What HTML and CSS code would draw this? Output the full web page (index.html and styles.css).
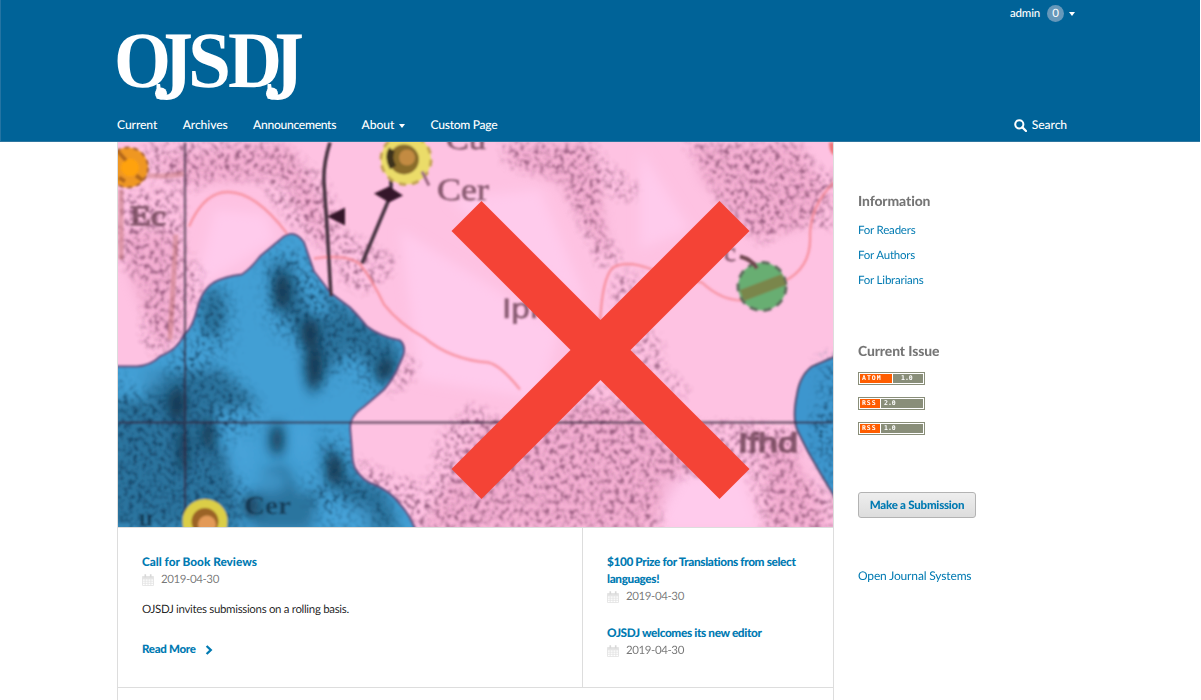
FILE: index.html
```html
<!DOCTYPE html>
<html lang="en">
<head>
<meta charset="utf-8">
<title>OJSDJ</title>
<link rel="stylesheet" href="styles.css">
</head>
<body>
<header class="site-header">
  <div class="user-bar"><a>admin</a><span class="count">0</span><i class="caret"></i></div>
  <svg class="logo" width="188" height="72" viewBox="116 31 188 72" role="img" aria-label="OJSDJ">
    <g class="logo-text">
      <text transform="translate(114 87) scale(1 1.17)" font-size="68" textLength="57" lengthAdjust="spacingAndGlyphs">O</text>
      <text transform="translate(153 99) scale(1 1.45)" font-size="68" textLength="40" lengthAdjust="spacingAndGlyphs">J</text>
      <text transform="translate(188 87) scale(1 1.17)" font-size="68" textLength="43" lengthAdjust="spacingAndGlyphs">S</text>
      <text transform="translate(228 87) scale(1 1.18)" font-size="68" textLength="54" lengthAdjust="spacingAndGlyphs">D</text>
      <text transform="translate(264 99) scale(1 1.45)" font-size="68" textLength="40" lengthAdjust="spacingAndGlyphs">J</text>
      <circle cx="161" cy="93.5" r="6"/><circle cx="272" cy="93.5" r="6"/>
    </g>
  </svg>
  <div class="nav-row">
    <nav class="nav">
      <a>Current</a><a>Archives</a><a class="tight">Announcements</a><a>About<i class="caret"></i></a><a class="tight">Custom Page</a>
    </nav>
    <a class="search"><svg width="13" height="13" viewBox="0 0 13 13"><circle cx="5.3" cy="5.3" r="4.1" fill="none" stroke="#fff" stroke-width="2"/><path d="M8.4 8.4L12 12" stroke="#fff" stroke-width="2.2" stroke-linecap="round"/></svg>Search</a>
  </div>
</header>
<div class="page">
  <main class="main">
    <svg class="map" width="715" height="385" viewBox="118 142.5 715 385">
      <defs>
        <filter id="dots" x="-5%" y="-5%" width="110%" height="110%" color-interpolation-filters="sRGB">
          <feTurbulence type="fractalNoise" baseFrequency="0.2" numOctaves="3" seed="7"/>
          <feColorMatrix values="0 0 0 0 .42  0 0 0 0 .2  0 0 0 0 .34  3.4 0 0 0 -1.6" result="n"/>
          <feGaussianBlur in="SourceAlpha" stdDeviation="4" result="s"/>
          <feComposite in="n" in2="s" operator="in"/>
        </filter>
        <filter id="inkdots" x="-5%" y="-5%" width="110%" height="110%" color-interpolation-filters="sRGB">
          <feTurbulence type="fractalNoise" baseFrequency="0.21" numOctaves="2" seed="3"/>
          <feColorMatrix values="0 0 0 0 .08  0 0 0 0 .25  0 0 0 0 .38  3.2 0 0 0 -1.45" result="n"/>
          <feGaussianBlur in="SourceAlpha" stdDeviation="9" result="s"/>
          <feComposite in="n" in2="s" operator="in"/>
        </filter>
        <filter id="soft"><feGaussianBlur stdDeviation="0.9"/></filter>
        <filter id="shade" x="-60%" y="-60%" width="220%" height="220%"><feGaussianBlur stdDeviation="6"/></filter>
        <path id="lake" d="M110 367H137Q151 366 160 357Q178 350 184 335Q192 330 197 310Q202 290 214 283Q225 277 242 275Q251 269 260 257L284 237Q295 230 304 243Q309 258 314 272Q322 282 330 293L350 308Q359 317 367 327Q380 337 400 341Q408 348 400 363Q395 377 384 390L364 407Q350 416 350 428L352 452Q352 466 357 472Q364 482 374 485Q391 492 400 505Q410 515 417 535H110Z"/>
        <clipPath id="lakeclip"><use href="#lake"/></clipPath>
      </defs>
      <rect x="110" y="135" width="730" height="400" fill="#fec2e2"/>
      <g fill="#ffcbec" filter="url(#shade)">
        <path d="M215 210L265 215L275 240L195 290ZM400 230L560 330L540 400L420 380ZM540 190L590 310L450 200ZM660 480L740 470L760 530H665ZM640 150L690 230L640 250Z"/>
      </g>
      <g fill="#dc7fa9" opacity=".25" filter="url(#shade)">
        <path d="M118 230H175L182 330L158 350L130 280ZM240 145H290L320 200L330 260L280 180L190 185L150 160ZM505 145H590L600 180L610 260L585 230L560 185L510 165ZM690 145H800L830 200L800 230L755 240L700 180ZM480 430L600 400L710 430L650 530H420ZM760 440H790L830 530H770Z"/>
      </g>
      <g filter="url(#soft)">
        <g filter="url(#dots)" opacity=".66">
          <path d="M145 143H280L325 180L340 220L325 250L285 220L260 180L215 178L195 190L150 178ZM120 190H183V330L160 360L142 340L145 290L118 260ZM188 250L204 275L196 305L186 310Z"/>
          <path d="M330 225L360 240L395 258L388 278L362 293L340 280Z"/>
          <path d="M502 143H592L608 165L638 186L630 202L598 190L600 220L622 262L600 268L578 220L560 180L505 166Z"/>
          <path d="M683 143H798L820 172L836 175V230L805 226L782 232L762 245L720 205L705 170Z"/>
          <path d="M615 275L640 270L628 302L612 304ZM635 330L658 336L666 368L688 390L682 400L655 370L632 375Z"/>
          <path d="M470 405L510 422L560 425L580 400L600 385L660 425L740 423L800 430L795 470L740 474L655 480L662 530H417L400 505L360 480L350 456L390 475L430 485L438 440Z"/>
          <path d="M748 474L795 470L834 500V530H765Z"/>
          <path d="M404 355L417 362L410 382L388 398Z"/>
        </g>
        <g fill="none" stroke="#f6838c" stroke-width="2.4" opacity=".75">
          <path d="M189 227Q202 197 222 193Q252 188 287 234"/>
          <path d="M314 259Q350 254 361 266Q372 280 384 305Q400 325 424 338Q450 360 488 363Q500 365 520 390"/>
          <path d="M600 325Q602 278 613 268Q627 260 652 270L702 283Q722 302 746 301M784 282Q812 268 810 235Q811 205 834 183"/>
          <path d="M118 172Q160 180 183 174M176 235L170 340M121 190V260" stroke="#ba655e" stroke-width="5" opacity=".5"/>
        </g>
        <use href="#lake" fill="#439fd4"/>
        <g clip-path="url(#lakeclip)">
          <g fill="#174c6b" opacity=".5" filter="url(#shade)">
            <ellipse cx="213" cy="313" rx="13" ry="25"/>
            <path d="M271 260L290 265L310 315L350 320L350 350L320 380L311 400L305 345L275 305Z"/>
            <path d="M140 375L220 370L260 405L212 410L218 450L182 470Z"/>
            <path d="M110 400H165L230 455L240 528H110ZM320 435L350 475L385 490L400 530H370L335 490ZM320 290L400 345L390 385L350 350Z"/>
            <ellipse cx="277" cy="440" rx="8" ry="17"/>
            <path d="M255 500L265 470L285 465L300 495L320 490L310 530H255Z"/>
          </g>
          <g fill="#0b2031" opacity=".75" filter="url(#shade)">
            <ellipse cx="282" cy="292" rx="8" ry="19"/><ellipse cx="310" cy="334" rx="9" ry="15"/><ellipse cx="314" cy="367" rx="8" ry="23"/>
            <ellipse cx="177" cy="405" rx="9" ry="17"/><ellipse cx="183" cy="450" rx="5" ry="24"/><ellipse cx="334" cy="470" rx="8" ry="17"/>
            <ellipse cx="385" cy="370" rx="8" ry="13" transform="rotate(25 385 370)"/><ellipse cx="251" cy="507" rx="8" ry="12"/><ellipse cx="277" cy="440" rx="5" ry="14"/><ellipse cx="208" cy="435" rx="6" ry="16"/>
          </g>
          <g filter="url(#inkdots)" opacity=".8">
            <path d="M195 300L230 285V350L190 360ZM265 255L300 250L330 295L400 350L375 400L350 360L320 390L305 350L270 325ZM180 345L240 385L260 420L215 460L250 490L240 530H110V375L160 400ZM300 480L370 480L400 530H330ZM320 430L350 450L355 490H330Z"/>
          </g>
          <g fill="#48a5dc" opacity=".6" filter="url(#shade)">
            <ellipse cx="352" cy="519" rx="23" ry="15"/><ellipse cx="302" cy="441" rx="11" ry="22"/><ellipse cx="270" cy="482" rx="17" ry="12"/><ellipse cx="145" cy="380" rx="20" ry="9"/><ellipse cx="240" cy="455" rx="13" ry="24"/>
          </g>
        </g>
        <use href="#lake" fill="none" stroke="#5b487b" stroke-width="2"/>
        <path d="M840 355L812 367Q800 376 797 395Q792 420 798 432L808 452L823 478L840 506Z" fill="#3d96ce" stroke="#50446b" stroke-width="2"/>
        <path d="M825 360L840 355V500L824 460L809 430L825 405Z" filter="url(#inkdots)"/>
        <path d="M118 423H833M185 143V527" stroke="#35263d" stroke-width="2.4" opacity=".65"/>
        <g fill="none" stroke="#463041" stroke-width="3.6"><path d="M330 143Q323 165 324 183L327 227L331 297M391 160V195L362 264"/></g>
        <path d="M374 194L389 187L403 196L389 203ZM327 217L345 208V226Z" fill="#351529"/>
        <circle cx="128" cy="168" r="20" fill="#ef9723" stroke="#a45d36" stroke-width="2" stroke-dasharray="5 4"/><circle cx="130" cy="168" r="9" fill="#ffa20e"/><path d="M118 152l8 9M136 176l7 5M119 178l6 4" stroke="#b3681f" stroke-width="4" fill="none"/>
        <circle cx="406" cy="160" r="25" fill="#ebdc69"/><circle cx="406" cy="160" r="25" fill="none" stroke="#c3a353" stroke-width="3" stroke-dasharray="7 6"/><circle cx="404" cy="160" r="15" fill="#8a6c2c"/><circle cx="407" cy="158" r="8" fill="#c38b43"/><path d="M392 150Q387 157 393 168" stroke="#3d301c" stroke-width="7" fill="none"/><path d="M422 172l7 14" stroke="#9e6984" stroke-width="3"/>
        <circle cx="205" cy="522" r="18" fill="#9b6426" stroke="#dbce47" stroke-width="9"/><circle cx="207" cy="525" r="9" fill="#e39a58"/>
        <circle cx="762" cy="287" r="24" fill="#68ae72" stroke="#5e6c5d" stroke-width="3" stroke-dasharray="8 6"/><path d="M742 296L784 280" stroke="#82763d" stroke-width="12" opacity=".7"/><path d="M740 257Q752 260 757 269" stroke="#704650" stroke-width="4" fill="none"/>
        <path d="M829 143H834V156Q829 153 829 143Z" fill="#ef7477"/>
        <g class="map-label">
          <text class="heavy" x="130" y="225" font-size="28" textLength="36" lengthAdjust="spacingAndGlyphs">Ec</text>
          <text x="437" y="200" font-size="31" textLength="52" lengthAdjust="spacingAndGlyphs">Cer</text>
          <text x="446" y="149" font-size="28" textLength="40" lengthAdjust="spacingAndGlyphs">Cu</text>
          <text class="sans" x="502" y="318" font-size="28" textLength="37" lengthAdjust="spacingAndGlyphs">Ipf</text>
          <text x="724" y="261" font-size="27">c</text>
          <text class="sans heavy" x="738" y="452" font-size="27" textLength="60" lengthAdjust="spacingAndGlyphs">Ifhd</text>
          <text class="ink" x="244" y="514" font-size="26" textLength="47" lengthAdjust="spacingAndGlyphs">Cer</text>
          <text class="ink" x="139" y="526" font-size="25">u</text>
        </g>
      </g>
    </svg>
    <div class="announcements">
      <article class="featured">
        <h2>Call for Book Reviews</h2>
        <div class="date"><svg class="cal" viewBox="0 0 12 12"><use href="#cal"/></svg>2019-04-30</div>
        <p>OJSDJ invites submissions on a rolling basis.</p>
        <a class="more">Read More<svg width="8" height="10" viewBox="0 0 8 10"><path d="M1.6 1L5.8 5L1.6 9" fill="none" stroke="#007ab2" stroke-width="2.3"/></svg></a>
      </article>
      <div class="others">
        <article><h2>$100 Prize for Translations from select languages!</h2>
        <div class="date"><svg class="cal" viewBox="0 0 12 12"><use href="#cal"/></svg>2019-04-30</div></article>
        <article><h2>OJSDJ welcomes its new editor</h2>
        <div class="date"><svg class="cal" viewBox="0 0 12 12"><use href="#cal"/></svg>2019-04-30</div></article>
      </div>
    </div>
  </main>
  <aside class="sidebar">
    <section class="info"><h3>Information</h3><a>For Readers</a><a>For Authors</a><a>For Librarians</a></section>
    <section class="feeds"><h3>Current Issue</h3>
      <div class="feed"><b class="wide">ATOM</b><span class="center">1.0</span></div>
      <div class="feed"><b>RSS</b><span>2.0</span></div>
      <div class="feed"><b>RSS</b><span>1.0</span></div>
    </section>
    <a class="submit">Make a Submission</a>
    <a class="ojs">Open Journal Systems</a>
  </aside>
</div>
<svg class="cross" width="299" height="298" viewBox="0 0 299 298"><path transform="translate(.5)" d="M30 0L149 119L268 0L298 30L179 149L298 268L268 298L149 179L30 298L0 268L119 149L0 30Z" fill="#f44336"/></svg>
<svg width="0" height="0" class="symbols"><symbol id="cal" viewBox="0 0 12 12"><path d="M.5 2.5h11v9H.5zM.5 5h11M.5 7.2h11M.5 9.3h11M3.2 5v6.5M6 5v6.5M8.8 5v6.5" fill="none" stroke="#e2e2e2" stroke-width=".8"/><path d="M.5 2.3h11V4.8H.5z" fill="#e2e2e2"/><path d="M3.3.3v3M8.7.3v3" stroke="#d8d8d8" stroke-width="1.6"/></symbol></svg>
</body>
</html>
```
FILE: styles.css
```css
* { box-sizing: border-box; }
body { margin: 0; height: 700px; overflow: hidden; position: relative; background: #fff; font: 11.5px/16px Lato, sans-serif; color: rgba(0,0,0,.87); text-rendering: geometricPrecision; }
h2, h3, p { margin: 0; }
a { color: #007ab2; }
.site-header { height: 142px; margin-right: 1px; padding: 0 125px 0 116px; background: #006398; display: flex; flex-direction: column; border-bottom: 1px solid #2d76a0; border-left: 1px solid #2474a3; }
.site-header a { color: #fff; font-weight: 500; }
.user-bar { display: flex; justify-content: flex-end; align-items: center; height: 27px; font-size: 11.5px; letter-spacing: -.2px; }
.count { width: 17px; height: 17px; border-radius: 50%; background: #6698ba; color: #fff; text-align: center; line-height: 17px; margin: 0 5px 0 7px; }
.caret { display: inline-block; border: 3.5px solid transparent; border-top: 4px solid #fff; border-bottom: 0; }
.logo { margin: 4px 0 0 -1px; flex: none; overflow: visible; }
.logo-text { font-family: "Liberation Serif", serif; font-weight: bold; fill: #fff; }
.nav-row { display: flex; justify-content: space-between; align-items: center; height: 20px; margin-top: 12px; font-size: 12.1px; padding-right: 8px; }
.nav { display: flex; gap: 25.4px; letter-spacing: -.08px; }
.nav .tight { letter-spacing: -.3px; }
.nav .caret { margin-left: 5px; vertical-align: 1px; }
.search { display: flex; align-items: center; gap: 5px; letter-spacing: -.1px; }
.page { display: flex; }
.main { width: 717px; margin-left: 117px; border: solid #ddd; border-width: 0 1px; height: 558px; }
.map { display: block; }
.map-label { font-family: "Liberation Serif", serif; fill: #6c4054; stroke: #6c4054; stroke-width: .6; opacity: .8; }
.map-label .sans { font-family: "Liberation Sans", sans-serif; }
.map-label .heavy { stroke-width: 1.4; }
.map-label .ink { fill: #14324a; font-weight: bold; stroke: none; }
.announcements { display: flex; border: solid #ddd; border-width: 1px 0; height: 161px; }
.announcements h2 { font-size: 11.8px; line-height: 17px; font-weight: 900; color: #007ab2; }
.featured { width: 465px; border-right: 1px solid #ddd; padding: 25px 24px 0; }
.others { flex: 1; padding: 25px 24px 0; }
.others h2 { letter-spacing: -.36px; }
.others article { margin-bottom: 17px; }
.date { display: flex; align-items: center; height: 20px; font-size: 11.5px; letter-spacing: -.4px; color: rgba(0,0,0,.54); }
.cal { width: 12px; height: 12px; margin-right: 7px; }
.featured p { margin-top: 12px; letter-spacing: -.33px; }
.more { display: flex; align-items: center; gap: 9px; margin-top: 24px; font-weight: 900; letter-spacing: -.3px; }
.sidebar { padding: 50px 0 0 24px; display: flex; flex-direction: column; align-items: flex-start; }
.sidebar h3 { font-size: 13.9px; line-height: 17px; font-weight: 900; letter-spacing: -.1px; color: rgba(0,0,0,.54); }
.info { display: flex; flex-direction: column; gap: 9px; height: 150px; letter-spacing: -.2px; }
.info h3 { margin-bottom: 5px; }
.feeds { display: flex; flex-direction: column; gap: 12px; height: 150px; }
.feeds h3 { margin-bottom: 1px; }
.feed { width: 67px; height: 13px; border: 1px solid #898e79; padding: 1px; background: #fff; display: flex; gap: 1px; color: #fff; font: bold 6.5px/9px "DejaVu Sans Mono", monospace; }
.feed b { width: 20px; background: #ff5d00; padding-left: 2px; letter-spacing: .9px; }
.feed .wide { width: 32px; letter-spacing: 1px; }
.feed span { flex: 1; background: #898e79; padding-left: 3px; }
.feed .center { padding-left: 8px; }
.submit { border: 1px solid #b3b3b3; border-radius: 3px; height: 26px; width: 118px; text-align: center; background: linear-gradient(#eee, #ddd); font-weight: 900; line-height: 26px; letter-spacing: -.23px; }
.ojs { margin-top: 50px; font-size: 12px; letter-spacing: -.15px; }
.cross { position: absolute; left: 451px; top: 201px; }
.symbols { position: absolute; }
```
